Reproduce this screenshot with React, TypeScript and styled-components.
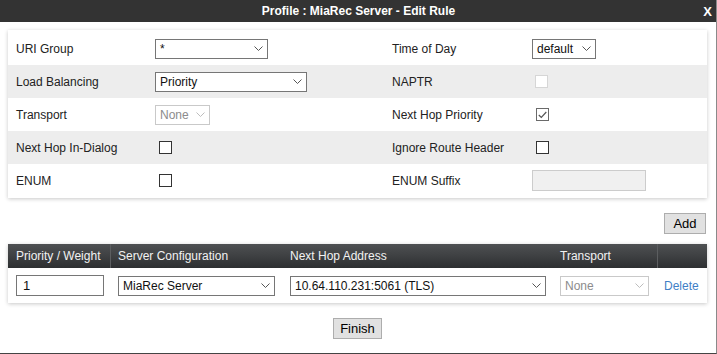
import { createGlobalStyle } from 'styled-components';
import styled from 'styled-components';

const GlobalStyle = createGlobalStyle`
  html, body {
    margin: 0;
    padding: 0;
    background: #fff;
  }
  body {
    font-family: 'Liberation Sans', Arial, sans-serif;
    font-size: 12px;
    color: #222;
  }
`;

const Window = styled.div`
  width: 717px;
  height: 354px;
  box-sizing: border-box;
  border-right: 1px solid #8a8a8a;
  border-bottom: 1px solid #444;
  background: #fff;
  display: flex;
  flex-direction: column;
`;

const TitleBar = styled.div`
  height: 22px;
  flex: none;
  background: #333;
  color: #fff;
  font-weight: bold;
  font-size: 12px;
  display: grid;
  grid-template-columns: 40px 1fr 40px;
  align-items: center;
`;

const Title = styled.div`
  text-align: center;
  padding-left: 1px;
`;

const Close = styled.div`
  text-align: right;
  padding-right: 4px;
  font-size: 13px;
`;

const Body = styled.div`
  padding: 8px 9px 0 8px;
  display: flex;
  flex-direction: column;
`;

const Card = styled.div`
  background: #fff;
  box-shadow: 0 1px 4px rgba(0, 0, 0, 0.22);
`;

const FormCard = styled(Card)`
  padding: 2px 0 1px;
`;

const FormRow = styled.div<{ $shade: boolean }>`
  height: 33px;
  display: grid;
  grid-template-columns: 139px 237px 140px 1fr;
  align-items: center;
  padding-left: 8px;
  background: ${({ $shade }) => ($shade ? '#ededed' : '#fff')};
`;

const Label = styled.div`
  color: #222;
`;

const SelectBox = styled.div<{ $width: number; $disabled?: boolean }>`
  width: ${({ $width }) => $width}px;
  height: 20px;
  box-sizing: border-box;
  border: 1px solid ${({ $disabled }) => ($disabled ? '#c9c9c9' : '#767676')};
  background: #fff;
  color: ${({ $disabled }) => ($disabled ? '#8c8c8c' : '#111')};
  display: flex;
  align-items: center;
  justify-content: space-between;
  padding: 0 4px 0 4px;
  font-size: 12px;
`;

const Chevron = ({ light }: { light?: boolean }) => (
  <svg width="9" height="5" viewBox="0 0 9 5">
    <polyline
      points="0.5,0.5 4.5,4.5 8.5,0.5"
      fill="none"
      stroke={light ? '#bdbdbd' : '#555'}
      strokeWidth="1"
    />
  </svg>
);

const Select = ({
  value,
  width,
  disabled,
}: {
  value: string;
  width: number;
  disabled?: boolean;
}) => (
  <SelectBox $width={width} $disabled={disabled}>
    <span>{value}</span>
    <Chevron light={disabled} />
  </SelectBox>
);

const Box = styled.div<{ $disabled?: boolean }>`
  width: 13px;
  height: 13px;
  box-sizing: border-box;
  margin-left: ${({ $disabled }) => ($disabled ? 3 : 4)}px;
  border: 1px solid ${({ $disabled }) => ($disabled ? '#d6d6d6' : '#333')};
  background: #fff;
  display: flex;
  align-items: center;
  justify-content: center;
`;

const CheckedBox = styled(Box)`
  border-color: #6a6a6a;
`;

const Checkbox = ({
  checked,
  disabled,
}: {
  checked?: boolean;
  disabled?: boolean;
}) =>
  checked ? (
    <CheckedBox>
      <svg width="9" height="8" viewBox="0 0 9 8">
        <polyline
          points="0.8,4 3.3,6.5 8.3,1"
          fill="none"
          stroke="#555"
          strokeWidth="1.2"
        />
      </svg>
    </CheckedBox>
  ) : (
    <Box $disabled={disabled} />
  );

const TextInput = styled.div<{ $width: number; $disabled?: boolean }>`
  width: ${({ $width }) => $width}px;
  height: 21px;
  box-sizing: border-box;
  border: 1px solid ${({ $disabled }) => ($disabled ? '#cccccc' : '#767676')};
  background: ${({ $disabled }) => ($disabled ? '#f0f0f0' : '#fff')};
  display: flex;
  align-items: center;
  padding-left: 6px;
  font-size: 13px;
  color: #111;
`;

const ButtonRow = styled.div<{ $align: 'end' | 'center' }>`
  display: flex;
  justify-content: ${({ $align }) => ($align === 'end' ? 'flex-end' : 'center')};
  padding-right: ${({ $align }) => ($align === 'end' ? 1 : 0)}px;
`;

const Button = styled.button<{ $width: number }>`
  width: ${({ $width }) => $width}px;
  height: 21px;
  padding: 0;
  box-sizing: border-box;
  border: 1px solid #adadad;
  background: #e1e1e1;
  color: #000;
  font-family: 'Liberation Sans', Arial, sans-serif;
  font-size: 13px;
  border-radius: 0;
`;

const AddRow = styled(ButtonRow)`
  margin-top: 15px;
`;

const FinishRow = styled(ButtonRow)`
  margin-top: 15px;
`;

const TableCard = styled(Card)`
  margin-top: 10px;
`;

const COLUMNS = '103px 172px 270px 104px 1fr';

const HeadRow = styled.div`
  height: 24px;
  display: grid;
  grid-template-columns: ${COLUMNS};
  background: linear-gradient(#4f5153, #2d2f31);
  color: #f2f2f2;
`;

const HeadCell = styled.div<{ $sep?: 'left' | 'right' }>`
  display: flex;
  align-items: center;
  padding-left: ${({ $sep }) => ($sep === 'right' ? 8 : 7)}px;
  border-right: ${({ $sep }) => ($sep === 'right' ? '1px solid #5c5e60' : 'none')};
  border-left: ${({ $sep }) => ($sep === 'left' ? '1px solid #5c5e60' : 'none')};
`;

const DataRow = styled.div`
  height: 35px;
  display: grid;
  grid-template-columns: ${COLUMNS};
  align-items: center;
`;

const DataCell = styled.div<{ $first?: boolean }>`
  padding-left: ${({ $first }) => ($first ? 8 : 7)}px;
  display: flex;
  align-items: center;
`;

const DeleteLink = styled.a`
  color: #3f7fc6;
  font-size: 12px;
  padding-left: 0;
  cursor: pointer;
`;

type Field =
  | { kind: 'select'; value: string; width: number; disabled?: boolean }
  | { kind: 'check'; checked?: boolean; disabled?: boolean }
  | { kind: 'input'; width: number; disabled?: boolean };

const ROWS: { left: [string, Field]; right: [string, Field] }[] = [
  {
    left: ['URI Group', { kind: 'select', value: '*', width: 113 }],
    right: ['Time of Day', { kind: 'select', value: 'default', width: 64 }],
  },
  {
    left: ['Load Balancing', { kind: 'select', value: 'Priority', width: 152 }],
    right: ['NAPTR', { kind: 'check', disabled: true }],
  },
  {
    left: ['Transport', { kind: 'select', value: 'None', width: 55, disabled: true }],
    right: ['Next Hop Priority', { kind: 'check', checked: true }],
  },
  {
    left: ['Next Hop In-Dialog', { kind: 'check' }],
    right: ['Ignore Route Header', { kind: 'check' }],
  },
  {
    left: ['ENUM', { kind: 'check' }],
    right: ['ENUM Suffix', { kind: 'input', width: 114, disabled: true }],
  },
];

const renderField = (f: Field) => {
  if (f.kind === 'select')
    return <Select value={f.value} width={f.width} disabled={f.disabled} />;
  if (f.kind === 'check')
    return <Checkbox checked={f.checked} disabled={f.disabled} />;
  return <TextInput $width={f.width} $disabled={f.disabled} />;
};

const App = () => (
  <>
    <GlobalStyle />
    <Window>
      <TitleBar>
        <span />
        <Title>Profile : MiaRec Server - Edit Rule</Title>
        <Close>X</Close>
      </TitleBar>
      <Body>
        <FormCard>
          {ROWS.map((row, i) => (
            <FormRow key={row.left[0]} $shade={i % 2 === 1}>
              <Label>{row.left[0]}</Label>
              <div>{renderField(row.left[1])}</div>
              <Label>{row.right[0]}</Label>
              <div>{renderField(row.right[1])}</div>
            </FormRow>
          ))}
        </FormCard>

        <AddRow $align="end">
          <Button $width={42}>Add</Button>
        </AddRow>

        <TableCard>
          <HeadRow>
            <HeadCell $sep="right">Priority / Weight</HeadCell>
            <HeadCell>Server Configuration</HeadCell>
            <HeadCell>Next Hop Address</HeadCell>
            <HeadCell>Transport</HeadCell>
            <HeadCell $sep="left" />
          </HeadRow>
          <DataRow>
            <DataCell $first>
              <TextInput $width={88}>1</TextInput>
            </DataCell>
            <DataCell>
              <Select value="MiaRec Server" width={157} />
            </DataCell>
            <DataCell>
              <Select value="10.64.110.231:5061 (TLS)" width={256} />
            </DataCell>
            <DataCell>
              <Select value="None" width={89} disabled />
            </DataCell>
            <DataCell>
              <DeleteLink>Delete</DeleteLink>
            </DataCell>
          </DataRow>
        </TableCard>

        <FinishRow $align="center">
          <Button $width={49}>Finish</Button>
        </FinishRow>
      </Body>
    </Window>
  </>
);

export default App;
